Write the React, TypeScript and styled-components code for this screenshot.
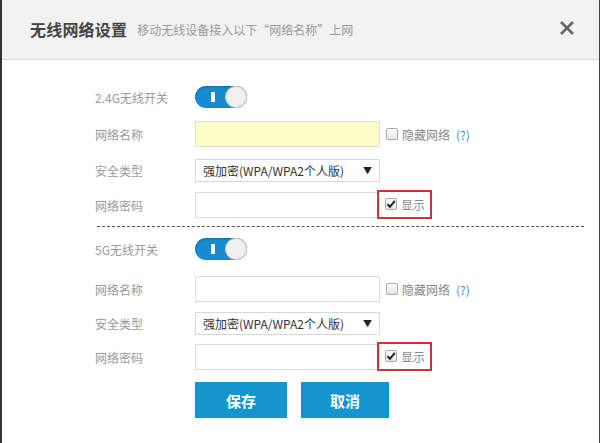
import React from "react";
import styled, { createGlobalStyle } from "styled-components";

const GlobalStyle = createGlobalStyle`
    html, body {
        margin: 0;
        padding: 0;
        background: #fff;
        font-family: "Noto Sans CJK SC", "Noto Sans", sans-serif;
    }
`;

const Dialog = styled.div`
    width: 600px;
    height: 443px;
    box-sizing: border-box;
    background: #fff;
    border-left: 2px solid #333;
    border-right: 1px solid #444;
    overflow: hidden;
`;

const Header = styled.div`
    height: 60px;
    box-sizing: border-box;
    background: #f2f2f2;
    border-bottom: 1px solid #d6d6d6;
    display: flex;
    align-items: center;
    padding: 0 22px 2px 28px;
`;

const Title = styled.h1`
    margin: 0;
    font-size: 16px;
    font-weight: bold;
    color: #444;
    letter-spacing: 0.2px;
`;

const SubTitle = styled.span`
    margin-left: 10px;
    padding-top: 2px;
    font-size: 12px;
    color: #999;
`;

const Close = styled.button`
    margin-left: auto;
    border: 0;
    background: none;
    padding: 0;
    width: 20px;
    height: 20px;
    cursor: pointer;
`;

const Body = styled.div`
    padding: 0 15px 0 93px;
`;

const Row = styled.div<{ $top: number }>`
    display: flex;
    align-items: center;
    margin-top: ${p => p.$top}px;
`;

const Label = styled.label`
    width: 100px;
    flex: none;
    font-size: 12px;
    color: #999;
`;

const TextInput = styled.input<{ $filled?: boolean }>`
    width: 185px;
    height: 26px;
    box-sizing: border-box;
    border: 1px solid #dcdcdc;
    background: ${p => (p.$filled ? "#ffffc8" : "#fff")};
    padding: 0 6px;
    font-size: 12px;
    outline: none;
`;

const Select = styled.div`
    width: 185px;
    height: 23px;
    box-sizing: border-box;
    border: 1px solid #d8d8d8;
    display: flex;
    align-items: center;
    justify-content: space-between;
    padding: 0 7px 0 7px;
    font-size: 12px;
    color: #333;

    span.arrow {
        font-size: 9px;
        color: #222;
    }
`;

const Check = styled.span`
    display: inline-flex;
    align-items: center;
    justify-content: center;
    width: 12px;
    height: 12px;
    box-sizing: border-box;
    border: 1px solid #aaa;
    border-radius: 2px;
    background: linear-gradient(#fff, #e6e6e6);
    margin-right: 4px;
`;

const CheckLabel = styled.span`
    display: inline-flex;
    align-items: center;
    margin-left: 6px;
    font-size: 12px;
    color: #888;
`;

const Help = styled.span`
    margin-left: 6px;
    color: #3a8fd0;
    font-size: 12px;
`;

const Highlight = styled.span`
    display: inline-flex;
    align-items: center;
    margin: -4px 0 -2px -3px;
    height: 29px;
    padding: 0 5px 0 6px;
    border: 2px solid #c8353a;
    box-sizing: border-box;
    font-size: 12px;
    color: #888;
`;

const Toggle = styled.span`
    position: relative;
    display: inline-block;
    width: 52px;
    height: 22px;
    border-radius: 11px;
    background: #168bd0;
    box-shadow: inset 0 1px 2px rgba(0, 0, 0, 0.2);

    &::before {
        content: "";
        position: absolute;
        left: 16px;
        top: 6px;
        width: 4px;
        height: 10px;
        background: #fff;
    }

    &::after {
        content: "";
        position: absolute;
        right: 0;
        top: 0;
        width: 22px;
        height: 22px;
        box-sizing: border-box;
        border-radius: 50%;
        background: #f0f0f0;
        border: 1px solid #d0d0d0;
    }
`;

const Divider = styled.div`
    margin: 8px 0 0 2px;
    border-top: 1px dashed #555;
`;

const Actions = styled.div`
    display: flex;
    gap: 14px;
    margin: 12px 0 0 100px;
`;

const Button = styled.button<{ $width: number }>`
    width: ${p => p.$width}px;
    height: 36px;
    border: 0;
    background: #1495cf;
    color: #fff;
    font-family: inherit;
    font-size: 15px;
    font-weight: bold;
    cursor: pointer;
`;

const CheckMark = () => (
    <svg width="10" height="10" viewBox="0 0 10 10">
        <path d="M1.5 5.2 L4 7.8 L8.8 1.8" fill="none" stroke="#222" strokeWidth="2" />
    </svg>
);

const Section: React.FC<{ name: string; filled?: boolean; first?: boolean }> = ({ name, filled, first }) => (
    <>
        <Row $top={first ? 26 : 11} style={{ height: 22 }}>
            <Label>{name}</Label>
            <Toggle />
        </Row>
        <Row $top={first ? 13 : 16}>
            <Label>网络名称</Label>
            <TextInput $filled={filled} />
            <CheckLabel>
                <Check />
                隐藏网络
            </CheckLabel>
            <Help>(?)</Help>
        </Row>
        <Row $top={first ? 12 : 10}>
            <Label>安全类型</Label>
            <Select>
                强加密(WPA/WPA2个人版)
                <span className="arrow">▼</span>
            </Select>
        </Row>
        <Row $top={first ? 10 : 9}>
            <Label>网络密码</Label>
            <TextInput type="password" />
            <Highlight>
                <Check>
                    <CheckMark />
                </Check>
                显示
            </Highlight>
        </Row>
    </>
);

export default function App() {
    return (
        <>
            <GlobalStyle />
            <Dialog>
                <Header>
                    <Title>无线网络设置</Title>
                    <SubTitle>移动无线设备接入以下“网络名称”上网</SubTitle>
                    <Close aria-label="关闭">
                        <svg width="18" height="18" viewBox="0 0 18 18">
                            <path d="M3 3 L15 15 M15 3 L3 15" stroke="#666" strokeWidth="2.6" />
                        </svg>
                    </Close>
                </Header>
                <Body>
                    <Section name="2.4G无线开关" filled first />
                    <Divider />
                    <Section name="5G无线开关" />
                    <Actions>
                        <Button $width={92}>保存</Button>
                        <Button $width={88}>取消</Button>
                    </Actions>
                </Body>
            </Dialog>
        </>
    );
}
